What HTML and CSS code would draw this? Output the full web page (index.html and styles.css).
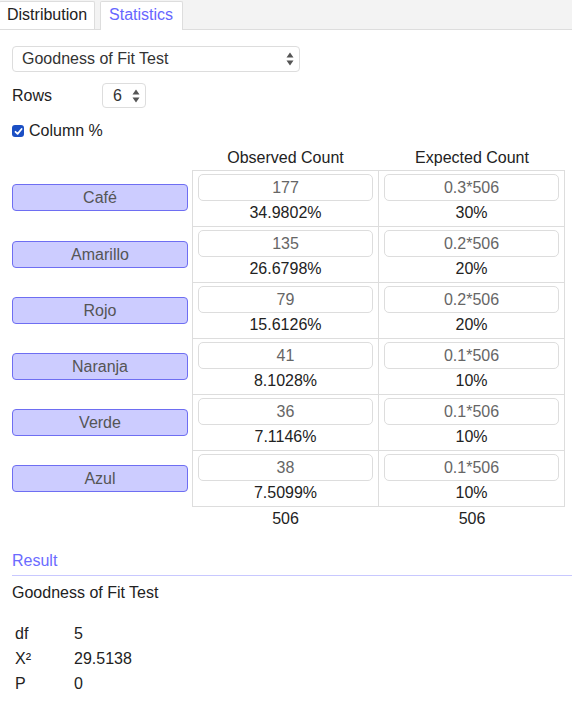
FILE: index.html
```html
<!DOCTYPE html>
<html>
<head>
<meta charset="utf-8">
<link rel="stylesheet" href="styles.css">
</head>
<body>
<div class="tabs">
  <div class="tab">Distribution</div>
  <div class="tab active">Statistics</div>
</div>
<div class="content">
  <div class="select wide">
    <span>Goodness of Fit Test</span>
    <svg class="arrows" width="8" height="14" viewBox="0 0 8 14"><path d="M4 0.5 L7.5 5.5 L0.5 5.5 Z M4 13.5 L7.5 8.5 L0.5 8.5 Z" fill="#555"/></svg>
  </div>
  <div class="rows-line">
    <span class="rows-label">Rows</span>
    <div class="select small">
      <span>6</span>
      <svg class="arrows" width="8" height="14" viewBox="0 0 8 14"><path d="M4 0.5 L7.5 5.5 L0.5 5.5 Z M4 13.5 L7.5 8.5 L0.5 8.5 Z" fill="#555"/></svg>
    </div>
  </div>
  <div class="check-line">
    <span class="checkbox"><svg width="9" height="9" viewBox="0 0 9 9"><path d="M1.5 4.8 L3.6 6.8 L7.6 2" stroke="#fff" stroke-width="1.8" fill="none" stroke-linecap="round" stroke-linejoin="round"/></svg></span>
    <span>Column %</span>
  </div>

  <div class="grid">
    <div class="head"></div>
    <div class="head">Observed Count</div>
    <div class="head">Expected Count</div>

    <div class="label"><div class="btn">Café</div></div>
    <div class="cell c1 first"><div class="input">177</div><div class="pct">34.9802%</div></div>
    <div class="cell c2 first"><div class="input">0.3*506</div><div class="pct">30%</div></div>

    <div class="label"><div class="btn">Amarillo</div></div>
    <div class="cell c1"><div class="input">135</div><div class="pct">26.6798%</div></div>
    <div class="cell c2"><div class="input">0.2*506</div><div class="pct">20%</div></div>

    <div class="label"><div class="btn">Rojo</div></div>
    <div class="cell c1"><div class="input">79</div><div class="pct">15.6126%</div></div>
    <div class="cell c2"><div class="input">0.2*506</div><div class="pct">20%</div></div>

    <div class="label"><div class="btn">Naranja</div></div>
    <div class="cell c1"><div class="input">41</div><div class="pct">8.1028%</div></div>
    <div class="cell c2"><div class="input">0.1*506</div><div class="pct">10%</div></div>

    <div class="label"><div class="btn">Verde</div></div>
    <div class="cell c1"><div class="input">36</div><div class="pct">7.1146%</div></div>
    <div class="cell c2"><div class="input">0.1*506</div><div class="pct">10%</div></div>

    <div class="label"><div class="btn">Azul</div></div>
    <div class="cell c1"><div class="input">38</div><div class="pct">7.5099%</div></div>
    <div class="cell c2"><div class="input">0.1*506</div><div class="pct">10%</div></div>

    <div class="total"></div>
    <div class="total">506</div>
    <div class="total">506</div>
  </div>

  <div class="result-head">Result</div>
  <div class="result-title">Goodness of Fit Test</div>
  <div class="stats">
    <span>df</span><span>5</span>
    <span>X²</span><span>29.5138</span>
    <span>P</span><span>0</span>
  </div>
</div>
</body>
</html>
```

FILE: styles.css
```css
html, body {
  margin: 0;
  padding: 0;
  background: #fff;
}
body {
  font-family: "Liberation Sans", Arial, sans-serif;
  font-size: 16px;
  color: #222;
  width: 572px;
  height: 714px;
  overflow: hidden;
}
.tabs {
  display: flex;
  align-items: flex-end;
  gap: 5px;
  height: 29px;
  background: #f3f3f3;
  border-bottom: 1px solid #ddd;
}
.tab {
  height: 27px;
  line-height: 26px;
  padding: 0 7px 0 7px;
  margin-left: -1px;
  background: #fff;
  border: 1px solid #ddd;
  border-bottom: none;
  border-radius: 2px 2px 0 0;
  color: #222;
}
.tab.active {
  margin-left: 0;
  padding: 0 9px 1px 8px;
  margin-bottom: -1px;
  color: #6666ff;
}
.content {
  padding: 0 12px;
}
.select {
  display: flex;
  align-items: center;
  justify-content: space-between;
  box-sizing: border-box;
  border: 1px solid #ddd;
  border-radius: 4px;
  background: #fff;
  color: #333;
}
.select.wide {
  margin-top: 16px;
  width: 288px;
  height: 26px;
  padding: 0 5px 0 9px;
}
.rows-line {
  display: flex;
  align-items: center;
  margin-top: 11px;
}
.rows-label {
  width: 90px;
}
.select.small {
  width: 44px;
  height: 25px;
  padding: 0 5px 0 10px;
}
.check-line {
  display: flex;
  align-items: center;
  gap: 5px;
  margin-top: 12px;
  height: 22px;
}
.checkbox {
  display: flex;
  align-items: center;
  justify-content: center;
  width: 12px;
  height: 12px;
  border-radius: 3px;
  background: #1b4fc4;
}
.grid {
  display: grid;
  grid-template-columns: 180px 187px 186px;
  margin-top: 4px;
}
.head {
  height: 24px;
  line-height: 24px;
  text-align: center;
  color: #222;
}
.label {
  display: flex;
  align-items: flex-start;
  padding-top: 14px;
}
.btn {
  box-sizing: border-box;
  width: 176px;
  height: 27px;
  line-height: 25px;
  text-align: center;
  background: #ccccff;
  border: 1px solid #6e6ef2;
  border-radius: 4px;
  color: #555;
}
.cell {
  box-sizing: border-box;
  height: 56px;
  padding: 3px 5px 0 5px;
  border-right: 1px solid #ddd;
  border-bottom: 1px solid #ddd;
}
.cell.c1 {
  border-left: 1px solid #ddd;
}
.cell.first {
  border-top: 1px solid #ddd;
  height: 57px;
}
.input {
  box-sizing: border-box;
  height: 27px;
  line-height: 25px;
  border: 1px solid #ddd;
  border-radius: 5px;
  text-align: center;
  color: #666;
  background: #fff;
}
.pct {
  margin-top: 2px;
  line-height: 20px;
  text-align: center;
  color: #222;
}
.total {
  height: 24px;
  line-height: 24px;
  text-align: center;
}
.result-head {
  margin-top: 20px;
  margin-right: -12px;
  line-height: 20px;
  padding-bottom: 4px;
  border-bottom: 1px solid #c8c8ff;
  color: #6b6bff;
}
.result-title {
  margin-top: 7px;
  line-height: 20px;
}
.stats {
  display: grid;
  grid-template-columns: 59px auto;
  margin-top: 18px;
  padding-left: 3px;
  line-height: 25px;
}
```
